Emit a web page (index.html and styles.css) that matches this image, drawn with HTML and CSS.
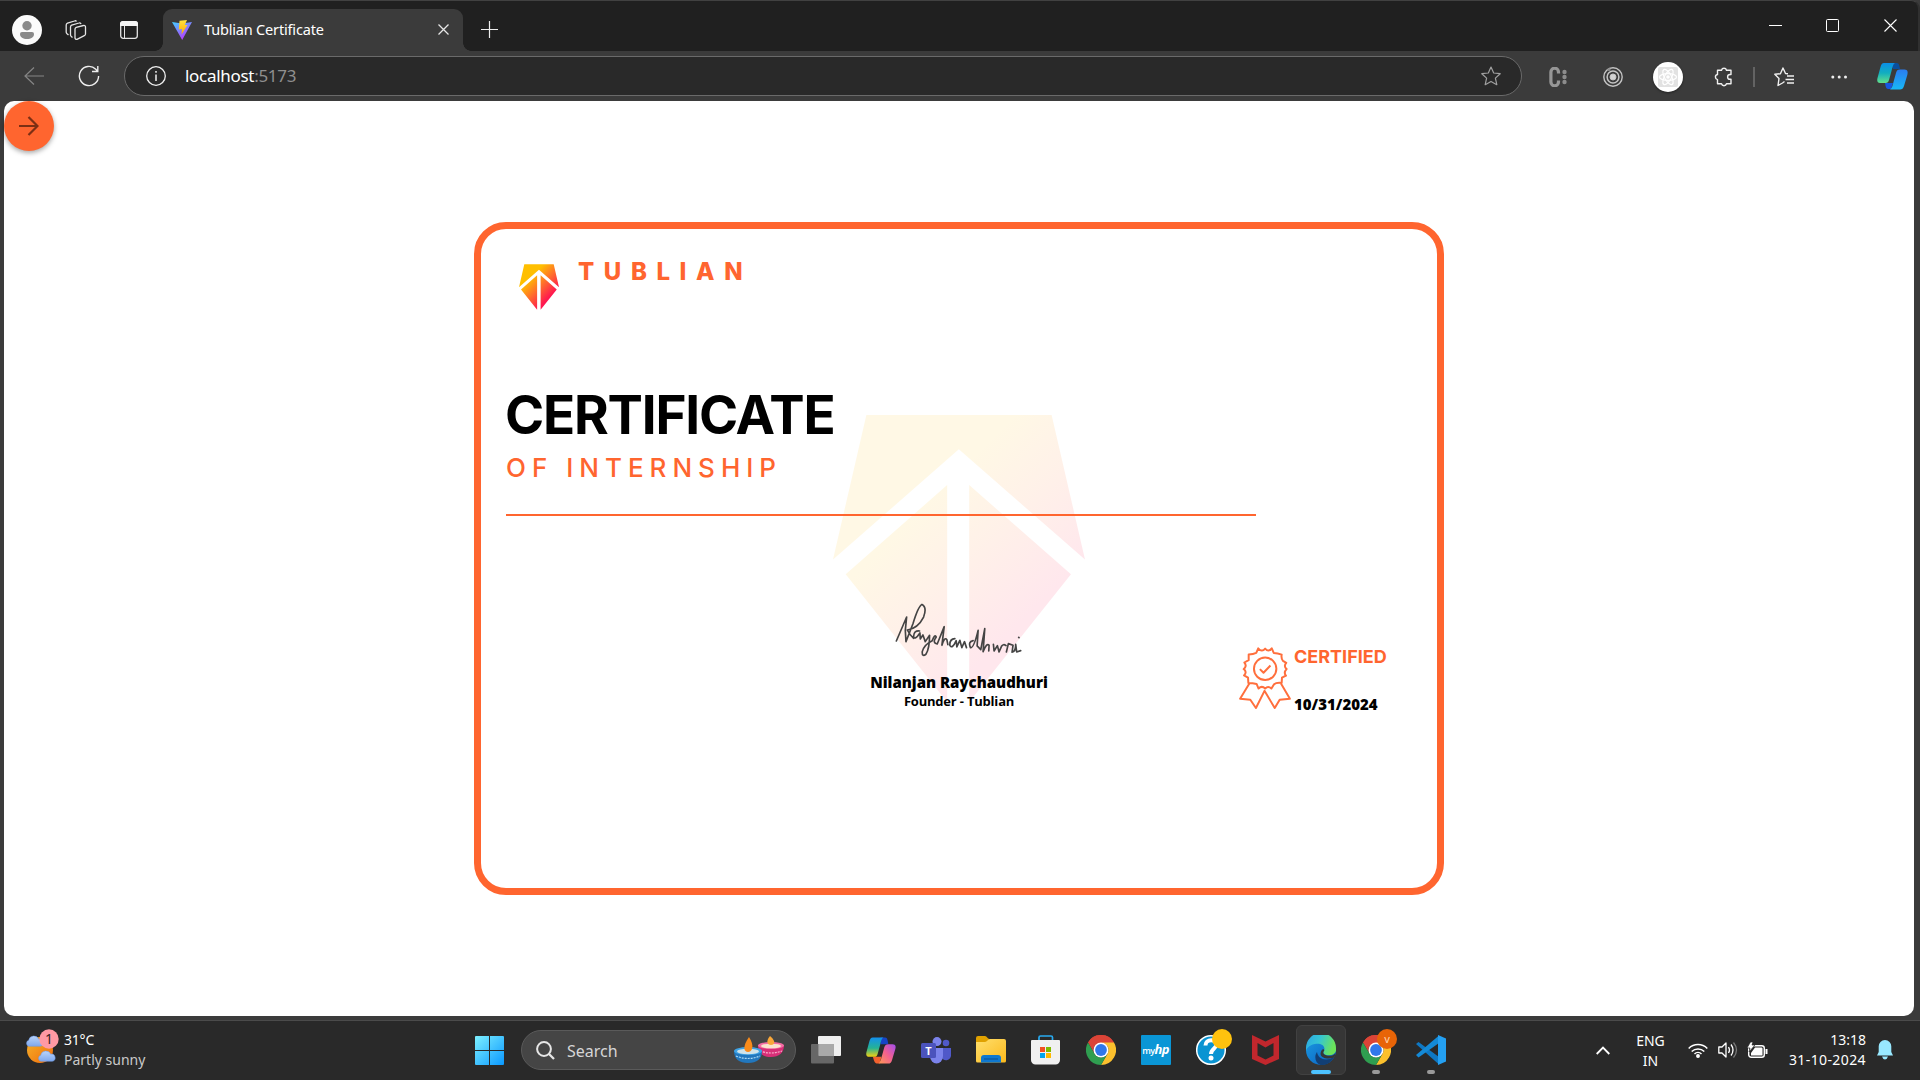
FILE: index.html
```html
<!DOCTYPE html>
<html lang="en">
<head>
<meta charset="utf-8">
<title>Tublian Certificate</title>
<link rel="stylesheet" href="styles.css">
</head>
<body>
<svg class="defs" aria-hidden="true">
  <defs>
    <linearGradient id="flame" gradientUnits="userSpaceOnUse" x1="250" y1="300" x2="620" y2="660"><stop offset="0" stop-color="#ffbf00"/><stop offset=".5" stop-color="#ff6d2c"/><stop offset="1" stop-color="#ff1850"/></linearGradient>
    <linearGradient id="flamePale" gradientUnits="userSpaceOnUse" x1="300" y1="330" x2="620" y2="650"><stop offset="0" stop-color="#fff8e5"/><stop offset=".5" stop-color="#fff0e9"/><stop offset="1" stop-color="#ffe7ed"/></linearGradient>
    <linearGradient id="vite" x1="0" y1="0" x2=".6" y2="1"><stop offset="0" stop-color="#41d1ff"/><stop offset="1" stop-color="#bd34fe"/></linearGradient>
    <linearGradient id="bolt" x1="0" y1="0" x2="0" y2="1"><stop offset="0" stop-color="#ffe340"/><stop offset="1" stop-color="#ffa800"/></linearGradient>
    <linearGradient id="win" gradientUnits="userSpaceOnUse" x1="0" y1="0" x2="29" y2="29"><stop offset="0" stop-color="#7df0ff"/><stop offset="1" stop-color="#0a98ff"/></linearGradient>
    <linearGradient id="copA" x1="0" y1="0" x2="0" y2="1"><stop offset="0" stop-color="#0a8fe8"/><stop offset=".5" stop-color="#12aebf"/><stop offset="1" stop-color="#63e08a"/></linearGradient>
    <linearGradient id="copB" x1="0" y1="0" x2="0" y2="1"><stop offset="0" stop-color="#2a7cf0"/><stop offset="1" stop-color="#18b8f5"/></linearGradient>
    <linearGradient id="copC" x1="0" y1="0" x2="0" y2="1"><stop offset="0" stop-color="#1390ee"/><stop offset=".55" stop-color="#25b394"/><stop offset="1" stop-color="#f4d010"/></linearGradient>
    <linearGradient id="copD" x1="1" y1="0" x2="0" y2="1"><stop offset="0" stop-color="#a04df0"/><stop offset=".5" stop-color="#f3608f"/><stop offset="1" stop-color="#ff9a52"/></linearGradient>
    <linearGradient id="folder" x1="0" y1="0" x2="1" y2="1"><stop offset="0" stop-color="#ffdf6d"/><stop offset="1" stop-color="#fbb91c"/></linearGradient>
    <linearGradient id="edgeTop" x1="0" y1="0" x2="1" y2=".3"><stop offset="0" stop-color="#2aa5e6"/><stop offset=".5" stop-color="#35c5d3"/><stop offset="1" stop-color="#6be35a"/></linearGradient>
    <linearGradient id="edgeSide" x1="0" y1="0" x2="1" y2="1"><stop offset="0" stop-color="#1b9de2"/><stop offset="1" stop-color="#0a5cc0"/></linearGradient>
    <linearGradient id="sun" x1="0" y1="0" x2="1" y2="1"><stop offset="0" stop-color="#f5b52a"/><stop offset="1" stop-color="#f06a0c"/></linearGradient>
    <linearGradient id="cloudFill" x1="0" y1="0" x2="0" y2="1"><stop offset="0" stop-color="#b9d4fb"/><stop offset="1" stop-color="#7fa8ee"/></linearGradient>
    <symbol id="tublian" viewBox="40 45 755 860"><path d="M140 45H695L795 478L417 148L40 478ZM78 522L382 255V905ZM753 522L448 255V905Z"/></symbol>
    <symbol id="chrome" viewBox="0 0 30 30">
      <path fill="#db4437" d="M15 15L2 7.5A15 15 0 0 1 28 7.5Z"/>
      <path fill="#db4437" d="M2 7.500A15 15 0 0 1 28 7.500H15A7.500 7.500 0 0 0 8.500 18.700Z"/>
      <path fill="#fbc02d" d="M28 7.500A15 15 0 0 1 15 30L21.500 18.700A7.500 7.500 0 0 0 15 7.500Z"/>
      <path fill="#2f9e50" d="M2 7.500A15 15 0 0 0 15 30L21.500 18.700A7.500 7.500 0 0 1 8.500 18.700Z"/>
      <circle cx="15" cy="15" r="7.500" fill="#fff"/><circle cx="15" cy="15" r="5.900" fill="#3077ea"/>
    </symbol>
    <symbol id="cloud" viewBox="0 0 18 11"><path fill="url(#cloudFill)" stroke="#6f9ae4" stroke-width=".5" d="M3.500 10.500A3 3 0 0 1 3.500 4.800A5 5 0 0 1 13 3.800A3.400 3.400 0 0 1 14.500 10.500Z"/></symbol>
  </defs>
</svg>

<header class="titlebar">
  <div class="slot avatar-slot"><svg class="avatar" width="30" height="30" viewBox="0 0 30 30"><circle cx="15" cy="15" r="15" fill="#fbfbfb"/><circle cx="15" cy="10.800" r="4.700" fill="#8a8a8a"/><path fill="#8a8a8a" d="M10 17H20A2 2 0 0 1 22 19C22 22.500 19 24 15 24S8 22.500 8 19A2 2 0 0 1 10 17Z"/></svg></div>
  <div class="slot workspaces"><svg width="22" height="21" viewBox="0 0 22 21" fill="none" stroke="#e4e4e4" stroke-width="1.300" stroke-linejoin="round"><path d="M11.200 7.300L18.500 5.500A1.500 1.500 0 0 1 20.500 7V14A2 2 0 0 1 19.300 15.700L12 19.300A1.500 1.500 0 0 1 10 18V9A2 2 0 0 1 11.200 7.300Z"/><path d="M7.500 17.500L6.300 16.500A2 2 0 0 1 5.500 15V7A2 2 0 0 1 6.700 5.200L14 3A1.500 1.500 0 0 1 16 4M3.500 15L1.800 13.500A2 2 0 0 1 1.200 12V5A2 2 0 0 1 2.500 3.200L9.500 1A1.500 1.500 0 0 1 11.500 1.500"/></svg></div>
  <div class="slot tab-actions"><svg width="18" height="18" viewBox="0 0 18 18"><rect x=".7" y=".7" width="16.600" height="16.600" rx="2.500" fill="none" stroke="#e4e4e4" stroke-width="1.300"/><path fill="#f4f4f4" d="M3 0H15A3 3 0 0 1 18 3V5H0V3A3 3 0 0 1 3 0Z"/><path stroke="#e4e4e4" d="M4.500 5V17.500"/></svg></div>
  <div class="tab">
    <svg width="20" height="20" viewBox="0 0 20 20"><path fill="url(#vite)" d="M0 2L10 3.500L20 2L10.200 20Z"/><path fill="url(#bolt)" d="M7.500.8L15 0L12.800 5H15.500L9.500 14.500L10 9L6.800 9.500Z"/></svg>
    <span class="tab-title">Tublian Certificate</span>
    <svg class="tab-close" width="11" height="11" viewBox="0 0 11 11" stroke="#e6e6e6" stroke-width="1.300"><path d="M.5.5L10.500 10.500M10.500.5L.5 10.500"/></svg>
  </div>
  <svg class="new-tab" width="17" height="17" viewBox="0 0 17 17" stroke="#eee" stroke-width="1.200"><path d="M8.500 0V17M0 8.500H17"/></svg>
  <div class="window-controls">
    <svg width="13" height="13" viewBox="0 0 13 13"><path stroke="#fff" d="M0 6.500H13"/></svg>
    <svg width="13" height="13" viewBox="0 0 13 13"><rect x=".5" y=".5" width="12" height="12" rx="1" fill="none" stroke="#fff"/></svg>
    <svg width="13" height="13" viewBox="0 0 13 13"><path stroke="#fff" stroke-width="1.100" d="M.5.5L12.500 12.500M12.500.5L.5 12.500"/></svg>
  </div>
</header>

<nav class="toolbar">
  <svg class="back" width="20" height="18" viewBox="0 0 20 18" fill="none" stroke="#858585" stroke-width="1.200"><path d="M20 9H1M10 .5L1 9L10 17.500"/></svg>
  <svg class="reload" width="22" height="22" viewBox="0 0 22 22" fill="none" stroke="#eee" stroke-width="1.400"><path d="M20.600 11A9.600 9.600 0 1 1 17.800 4.200L19.500 6.200M19.800 1V6.500H14"/></svg>
  <div class="address">
    <svg width="20" height="20" viewBox="0 0 20 20" fill="none" stroke="#f0f0f0" stroke-width="1.300"><circle cx="10" cy="10" r="9.300"/><path d="M10 8.500V15M10 5V6.700" stroke-width="1.500"/></svg>
    <span class="url">localhost<span class="port">:5173</span></span>
    <svg class="bookmark" width="20" height="20" viewBox="0 0 20 20" fill="none" stroke="#a0a0a0" stroke-width="1.200" stroke-linejoin="round"><path d="M10 1L12.700 7L19.200 7.700L14.400 12.100L15.800 18.700L10 15.400L4.200 18.700L5.600 12.100L.8 7.700L7.300 7Z"/></svg>
  </div>
  <div class="extensions">
    <span><svg width="18" height="20" viewBox="0 0 18 20"><path fill="none" stroke="#969696" stroke-width="3.200" d="M9.500 6.500V5A3.800 3.800 0 0 0 1.900 5V15A3.800 3.800 0 0 0 9.500 15V13.500"/><g fill="#8c8c8c"><circle cx="15.500" cy="5" r="2.200"/><circle cx="15.500" cy="10" r="2.200"/><circle cx="15.500" cy="15" r="2.200"/></g></svg></span>
    <span><svg width="20" height="20" viewBox="0 0 20 20" fill="none" stroke="#c4c4c4"><circle cx="10" cy="10" r="9.200" stroke-width="1.400"/><circle cx="10" cy="10" r="5.900" stroke-width="1.500"/><circle cx="10" cy="10" r="3" fill="#d2d2d2"/><circle cx="6" cy="2.500" r="1.600" fill="#8b8b8b" stroke="none"/></svg></span>
    <span><svg class="react" width="30" height="30" viewBox="0 0 30 30"><circle cx="15" cy="15" r="15" fill="#fff"/><rect x="5" y="5" width="20" height="20" rx="2" fill="#e2e2e2"/><g fill="none" stroke="#fff" stroke-width="1.200"><ellipse cx="15" cy="15" rx="8.500" ry="3.400"/><ellipse cx="15" cy="15" rx="8.500" ry="3.400" transform="rotate(60 15 15)"/><ellipse cx="15" cy="15" rx="8.500" ry="3.400" transform="rotate(120 15 15)"/></g><circle cx="15" cy="15" r="1.800" fill="#fff"/></svg></span>
    <span><svg width="19" height="20" viewBox="0 0 19 20" fill="none" stroke="#f0f0f0" stroke-width="1.400" stroke-linejoin="round"><path d="M3.500 3.200H7.500A2.600 2.600 0 0 1 12.500 3.200H17V7.500H16A2.300 2.300 0 0 0 16 12.300H17V16.800H12.500A2.600 2.600 0 0 1 7.500 16.800H3.500V12.600A2.600 2.600 0 0 1 3.500 7.500Z"/></svg></span>
    <i class="divider"></i>
    <span class="favorites"><svg width="20" height="20" viewBox="0 0 20 20" fill="none" stroke="#f0f0f0" stroke-width="1.400" stroke-linejoin="round"><path d="M14 6.700L11.500 6.500L9 1L6.400 6.700L.8 7.300L5 11.500L4 18.500L8.500 16L10.500 14.500M13 9H20M11.500 12.500H20M13 16H20"/></svg></span>
    <span class="more"><svg width="16" height="4" viewBox="0 0 16 4" fill="#eee"><circle cx="1.800" cy="2" r="1.500"/><circle cx="8.200" cy="2" r="1.500"/><circle cx="14.500" cy="2" r="1.500"/></svg></span>
    <span class="copilot"><svg width="31" height="27" viewBox="0 0 31 27"><path fill="#0a4f9d" d="M14 0H20C22 0 22.500 3 23 6H16Z"/><path fill="#1657e0" d="M8 20H16L14 26H11C9 26 8.500 23 8 20Z"/><path fill="url(#copA)" d="M7 0H18C16 1 15.500 4 14.500 8L12 17C11.500 19 10.500 20 8.500 20H3C0 20 0 17 .5 15L3.500 4C4.300 1.500 5 0 7 0Z"/><path fill="url(#copB)" d="M23 6.500H27.500C31 6.500 31 9.500 30.300 12L27 23C26.300 25.500 25 26.500 23 26.500H13C15 25 15.500 23 16.500 19L19 10C19.700 7.500 20.500 6.500 23 6.500Z"/></svg></span>
  </div>
</nav>

<main class="page">
  <button class="next" aria-label="Next"><svg width="20" height="20" viewBox="0 0 20 20" fill="none" stroke="#7c2f14" stroke-width="2.200"><path d="M0 10H18M9.500 1L18.500 10L9.500 19"/></svg></button>
  <article class="certificate">
    <svg class="watermark" fill="url(#flamePale)"><use href="#tublian"/></svg>
    <div class="brand">
      <svg class="logo" fill="url(#flame)"><use href="#tublian"/></svg>
      <span class="brand-name">TUBLIAN</span>
    </div>
    <h1>CERTIFICATE</h1>
    <h2>OF INTERNSHIP</h2>
    <hr>
    <div class="sign-row">
      <div class="signer">
        <svg class="signature" viewBox="225 605 385 165" fill="none" stroke="#444" stroke-width="5" stroke-linecap="round" stroke-linejoin="round"><path d="M229 722L260 650L256 690L258 724L279 670Q295 617 306 612Q322 620 311 650Q294 684 262 689Q270 705 281 714M299 692Q282 690 281 708Q284 722 300 698L301 716L309 704L316 724L329 705Q329 745 318 762Q306 771 307 754Q312 733 337 721Q345 700 349 710Q336 728 352 731L373 679L366 735Q374 708 381 718L384 733M405 715Q389 716 390 735Q397 748 409 721L411 740L420 720L426 742L434 724L440 742M460 721Q444 724 452 742Q462 744 475 690L472 737L483 748L495 685L490 754Q501 726 508 735L507 752M521 732L523 752L533 736L538 755L546 737Q551 730 559 736M560 755L566 730L580 735L577 756Q588 755 588 732L591 755L603 751M597 711L598 712"/></svg>
        <strong class="signer-name">Nilanjan Raychaudhuri</strong>
        <span class="signer-role">Founder - Tublian</span>
      </div>
      <div class="seal">
        <svg class="ribbon" viewBox="57 80 157 188" fill="none" stroke="#ff6f3d" stroke-width="6" stroke-linejoin="round"><path d="M115 84Q126 97 136 85Q146 97 156 84L162 98Q174 98 186 103Q184 115 190 122L200 128Q191 138 201 147Q191 157 199 167L187 173L186 189Q170 187 163 193L155 206Q145 196 136 206Q126 196 116 206L110 192Q98 189 85 189L84 173L72 166Q82 156 71 147Q82 138 73 127L86 120L86 103Q100 102 109 98ZM89 189L60 237L91 240L108 265L134 213L165 265L180 240L211 237L183 189"/><circle cx="136" cy="146" r="34"/><path d="M120 147L131 158L152 136"/></svg>
        <div class="seal-text"><span class="certified">CERTIFIED</span><strong class="date">10/31/2024</strong></div>
      </div>
    </div>
  </article>
</main>

<footer class="taskbar">
  <div class="weather">
    <div class="weather-icon"><svg width="34" height="35" viewBox="0 0 34 35"><circle cx="15" cy="21" r="13" fill="url(#sun)"/><use href="#cloud" x="0" y="6" width="19" height="12"/><use href="#cloud" x="12" y="21" width="19" height="12"/><circle cx="24" cy="10" r="9.700" fill="#ff99a4"/></svg><span class="count">1</span></div>
    <div class="weather-text"><span>31°C</span><span class="sub">Partly sunny</span></div>
  </div>
  <svg class="start" width="29" height="29" viewBox="0 0 29 29" fill="url(#win)"><path d="M0 1A1 1 0 0 1 1 0H14V14H0ZM15 0H28A1 1 0 0 1 29 1V14H15ZM0 15H14V29H1A1 1 0 0 1 0 28ZM15 15H29V28A1 1 0 0 1 28 29H15Z"/></svg>
  <div class="search">
    <svg width="19" height="19" viewBox="0 0 19 19" fill="none" stroke="#e6e6e6" stroke-width="2"><circle cx="8" cy="8" r="6.900"/><path d="M13 13L18 18" stroke-width="2.300"/></svg>
    <span>Search</span>
    <svg class="lamps" width="50" height="28" viewBox="0 0 50 28"><path fill="#d82f78" d="M24 9H50C50 17 45 21 37 21S24 17 24 9Z"/><ellipse cx="37" cy="9.500" rx="13" ry="3.500" fill="#f56da5"/><ellipse cx="37" cy="10" rx="10" ry="2.300" fill="#fbe3cf"/><path fill="#f9a73a" d="M36 0C43 6 40 9 37 9S31 6 36 0Z"/><path stroke="#f7b5cf" stroke-width="1.200" stroke-dasharray="2 1" fill="none" d="M26 15Q37 19 48 15"/><path fill="#2277bd" d="M0 15H28C28 23 23 27 14 27S0 23 0 15Z"/><ellipse cx="14" cy="15" rx="14" ry="4" fill="#3ea3e6"/><ellipse cx="14" cy="15.500" rx="11" ry="2.700" fill="#cfe3ea"/><path fill="#f98b1b" d="M15 1C21 10 18 16 14 16S8 11 15 1Z"/><path stroke="#a9d9f5" stroke-width="1.200" stroke-dasharray="2 1" fill="none" d="M2 20Q14 25 26 20"/></svg>
  </div>
  <div class="apps">
    <span><svg width="30" height="28" viewBox="0 0 30 28"><rect x="7" width="23" height="20" rx="1" fill="#efefef"/><rect y="8" width="23" height="19.500" rx="1" fill="#777" opacity=".8"/><path fill="#a9a9a9" d="M8 8H23V20H8Z"/></svg></span>
    <span><svg width="30" height="27" viewBox="0 0 31 27"><path fill="#1744c4" d="M15 0H20C22 0 22.500 3 23 7H15Z"/><path fill="#f2612e" d="M7 20H16L14 27H11C9 27 8 23 7 20Z"/><path fill="url(#copC)" d="M7 0H18C16 1 15.500 4 14.500 8L12 17C11.500 19 10.500 20 8.500 20H3C0 20 0 17 .5 15L3.500 4C4.300 1.500 5 0 7 0Z"/><path fill="url(#copD)" d="M23 7H27.500C31 7 31 10 30.300 12L27 23C26.300 26 25 27 23 27H13C15 25 15.500 23 16.500 19L19 10C19.700 8 20.500 7 23 7Z"/></svg></span>
    <span><svg width="30" height="27" viewBox="0 0 30 27"><circle cx="25" cy="6" r="3.300" fill="#5059c9"/><path fill="#5059c9" d="M20 11H30V17.500A5 5 0 0 1 20 19Z"/><circle cx="16" cy="4.600" r="4.500" fill="#7b83eb"/><path fill="#7b83eb" d="M9 11H22V19A6.500 7.500 0 0 1 9 19Z"/><rect y="6" width="15" height="15" rx="1.500" fill="#4b53bc"/><text class="glyph-t" x="7.500" y="17.500" text-anchor="middle">T</text></svg></span>
    <span><svg width="30" height="28" viewBox="0 0 30 28"><path fill="#e0a100" d="M0 2A2 2 0 0 1 2 0H9C11 0 11.500 3 13.500 3V10H0Z"/><path fill="url(#folder)" d="M0 6H9C11 6 12 3 14 3H28A2 2 0 0 1 30 5V25A1.500 1.500 0 0 1 28.500 26.500H1.500A1.500 1.500 0 0 1 0 25Z"/><path fill="#0f78d0" d="M5 22A3 3 0 0 1 8 19H22A3 3 0 0 1 25 22V26.500H5Z"/><path stroke="#0a4f91" d="M8 23H22"/></svg></span>
    <span><svg width="29" height="30" viewBox="0 0 29 30"><path fill="none" stroke="#28aaf0" stroke-width="1.700" d="M8 6V2.500A1.500 1.500 0 0 1 9.500 1H20A1.500 1.500 0 0 1 21.500 2.500V6"/><path fill="#f0f0f0" d="M1 5H28A1 1 0 0 1 29 6V25A4.500 4.500 0 0 1 24.500 29.500H4.500A4.500 4.500 0 0 1 0 25V6A1 1 0 0 1 1 5Z"/><path fill="#f25022" d="M9 12H14V17H9Z"/><path fill="#7fba00" d="M15 12H20V17H15Z"/><path fill="#00a4ef" d="M9 18H14V23H9Z"/><path fill="#ffb900" d="M15 18H20V23H15Z"/></svg></span>
    <span><svg width="30" height="30"><use href="#chrome"/></svg></span>
    <span class="myhp"><b>my<em>hp</em></b></span>
    <span><svg width="36" height="36" viewBox="0 0 36 36" class="help"><circle cx="15" cy="21" r="14.300" fill="#0a94d2" stroke="#fff" stroke-width="1.500"/><path fill="none" stroke="#fff" stroke-width="4" d="M9.500 16.500C9.500 9.500 20.500 10 20.500 15.500C20.500 19.500 15 19.500 15 25"/><circle cx="15" cy="29" r="2.500" fill="#fff"/><circle cx="26" cy="10" r="10" fill="#ffc20e"/></svg></span>
    <span><svg width="27" height="30" viewBox="0 0 27 30"><path fill="#c1272d" d="M0 0L13.500 6.500L27 0V24L13.500 30L0 24Z"/><path fill="#292929" d="M5.500 8L13.500 12.500L21.500 8V20.500L13.500 24.500L5.500 20.500Z"/></svg></span>
    <span class="active"><svg width="30" height="30" viewBox="0 0 30 30"><circle cx="15" cy="15" r="15" fill="url(#edgeSide)"/><path fill="#123f75" d="M11 17C12 24 20 27 28 22C25 28 20 30.500 14.500 30C9 28 8 21 11 17Z"/><path fill="url(#edgeTop)" d="M0 13A15 15 0 0 1 30 13C31 19 25 21 20 20C18 19 16.500 18 18 16C20 11 15 8 9 9C5 9.500 1 12 0 16Z"/><path fill="#363636" d="M18.300 15.500C17 17 16.500 19 20 20.300C24 21.500 28 20.500 29 18.500C29.500 20 29 21.500 28 22.500C22 25 15 23 14.500 19C14.500 15 18 12.500 18.300 15.500Z"/></svg><i class="run wide"></i></span>
    <span><svg class="chrome-badged" width="36" height="36" viewBox="0 0 36 36"><use href="#chrome" y="6" width="30" height="30"/><circle cx="26" cy="10" r="10" fill="#e86407"/><text class="glyph-v" x="26" y="13.500" text-anchor="middle">V</text></svg><i class="run"></i></span>
    <span><svg width="30" height="30" viewBox="0 0 30 30"><path fill="#0e78c4" d="M0 9L2.500 7L23 22V29.500Z"/><path fill="#148ad7" d="M0 20L23 .5V8L2.500 22.500Z"/><path fill="#24a0f2" d="M22 0L30 3.500V26.500L22 30Z"/></svg><i class="run"></i></span>
  </div>
  <div class="tray">
    <svg class="chevron" width="14" height="9" viewBox="0 0 14 9" fill="none" stroke="#fff" stroke-width="1.800"><path d="M.7 8L7 1.500L13.300 8"/></svg>
    <div class="lang"><span>ENG</span><span>IN</span></div>
    <svg class="wifi" width="20" height="16" viewBox="0 0 20 16" fill="none" stroke="#fff" stroke-width="1.500"><path d="M.7 6.500A13 13 0 0 1 19.300 6.500M3.700 9.500A9 9 0 0 1 16.300 9.500M6.500 12A5 5 0 0 1 13.500 12"/><circle cx="10" cy="14" r="1.200" fill="#fff"/></svg>
    <svg class="volume" width="21" height="16" viewBox="0 0 21 16" fill="none" stroke="#fff" stroke-width="1.300" stroke-linejoin="round"><path d="M.8 5H4L8 1V15L4 11H.8ZM10.500 5Q12.500 8 10.500 11M13 2.500Q17 8 13 13.500"/><path stroke="#777" d="M15.500.5Q21.500 8 15.500 15.500"/></svg>
    <svg class="battery" width="21" height="17" viewBox="0 0 21 17"><rect x="1.700" y="3.700" width="15.600" height="11.600" rx="2.500" fill="none" stroke="#fff" stroke-width="1.400"/><path fill="#fff" d="M4 13V11L8 5.500H14.500A1 1 0 0 1 15.500 6.500V13.500H4ZM18.500 7H20.500V12H18.500Z"/><path fill="#fff" stroke="#292929" stroke-width=".7" d="M3.500 0H6L5 3H8L2 10L3 6H0Z"/></svg>
    <div class="clock"><span>13:18</span><span class="today">31-10-2024</span></div>
    <svg class="bell" width="16" height="20" viewBox="0 0 16 20" fill="#98e8ff"><path d="M8 0A6.300 6.300 0 0 1 14.300 6.500V12L16 15.500H0L1.700 12V6.500A6.300 6.300 0 0 1 8 0ZM5 16.500H11Q10 19.500 8 19.500T5 16.500Z"/></svg>
  </div>
</footer>
</body>
</html>
```

FILE: styles.css
```css
* { box-sizing: border-box; }
body {
  margin: 0;
  width: 1920px;
  height: 1080px;
  overflow: hidden;
  display: flex;
  flex-direction: column;
  background: #3b3b3b;
  font-family: "Noto Sans", "Open Sans", sans-serif;
  color: #fff;
}
svg { display: block; flex: none; }
.defs { position: absolute; width: 0; height: 0; }

/* Title bar */
.titlebar {
  height: 51px;
  flex: none;
  display: flex;
  align-items: center;
  background: #202020;
  border-top: 1px solid #414141;
  border-right: 2px solid #303030;
  border-top-right-radius: 9px;
}
.slot { display: flex; justify-content: center; padding-top: 8px; }
.avatar-slot { width: 54px; }
.workspaces { width: 44px; }
.tab-actions { width: 62px; }
.tab {
  position: relative;
  align-self: flex-end;
  width: 300px;
  height: 42px;
  margin-left: 3px;
  padding: 0 14px 1px 9px;
  display: flex;
  align-items: center;
  background: #3b3b3b;
  border-radius: 9px 9px 0 0;
}
.tab::before, .tab::after {
  content: "";
  position: absolute;
  bottom: 0;
  width: 8px;
  height: 8px;
}
.tab::before { left: -8px; background: radial-gradient(circle at 0 0, transparent 7.5px, #3b3b3b 8px); }
.tab::after { right: -8px; background: radial-gradient(circle at 100% 0, transparent 7.5px, #3b3b3b 8px); }
.tab-title { margin: 0 0 1px 12px; font-size: 14.500px; letter-spacing: -.18px; }
.tab-close { margin-left: auto; }
.new-tab { margin: 7px 0 0 18px; }
.window-controls { margin-left: auto; margin-right: 21.500px; margin-top: -1px; display: flex; gap: 44.500px; }

/* Toolbar */
.toolbar { height: 50px; flex: none; display: flex; align-items: center; }
.back { margin-left: 24px; }
.reload { margin-left: 34px; }
.address {
  width: 1398px;
  height: 40px;
  margin-left: 24px;
  padding: 0 20px 0 21px;
  display: flex;
  align-items: center;
  background: #292929;
  border: 1px solid #6a6a6a;
  border-radius: 20px;
}
.url { margin-left: 19px; font-size: 17px; letter-spacing: -.3px; line-height: 36px; padding-bottom: 1px; }
.port { color: #8f8f8f; }
.bookmark { margin-left: auto; }
.extensions { display: flex; align-items: center; margin: 1px 0 0 8px; }
.extensions span { width: 55.300px; display: flex; justify-content: center; }
.extensions .favorites { width: 53.500px; }
.extensions .more { width: 56.500px; }
.extensions .copilot { width: 50px; }
.divider { width: 2px; height: 20px; margin: 0 2px; background: #636363; }
.react { filter: drop-shadow(0 1px 1px #222); }

/* Page */
.page {
  position: relative;
  width: 1910px;
  height: 915px;
  flex: none;
  margin-left: 4px;
  display: flex;
  align-items: center;
  justify-content: center;
  background: #fff;
  border-radius: 10px;
  color: #000;
}
.next {
  position: absolute;
  left: 0;
  top: 0;
  width: 50px;
  height: 50px;
  padding: 0;
  display: flex;
  align-items: center;
  justify-content: center;
  border: 0;
  border-radius: 50%;
  background: #ff652f;
  box-shadow: 0 2px 5px rgba(0, 0, 0, .35);
}
.certificate {
  position: relative;
  width: 970px;
  height: 673px;
  padding-top: 29px;
  border: 7px solid #ff652f;
  border-radius: 32px;
}
.certificate > * { position: relative; }
.certificate .watermark { position: absolute; left: 352px; top: 186px; width: 252px; height: 287px; }
.brand { display: flex; height: 52px; padding-left: 38px; }
.logo { width: 40px; height: 46px; margin-top: 6px; }
.brand-name {
  margin-left: 19px;
  font: 800 24px/28px Inter, sans-serif;
  letter-spacing: 9.600px;
  color: #ff652f;
}
h1 {
  margin: 75px 0 0 24px;
  font: 700 53px/60px Inter, sans-serif;
  letter-spacing: -1.200px;
}
h2 {
  margin: 8px 0 0 25px;
  font: 500 26px/30px Inter, sans-serif;
  letter-spacing: 6px;
  color: #ff652f;
}
hr { width: 750px; height: 2px; margin: 31px 0 0 25px; border: 0; background: #ff652f; }
.sign-row { display: grid; grid-template-columns: 1fr 200px 1fr; margin-top: 86px; }
.signer { grid-column: 2; display: flex; flex-direction: column; align-items: center; white-space: nowrap; font-family: "Open Sans", sans-serif; }
.signature { width: 128px; height: 55px; }
.signer-name { margin-top: 15px; font-size: 15px; font-weight: 800; line-height: 20px; }
.signer-role { font-size: 13px; font-weight: 700; line-height: 18px; letter-spacing: -.2px; }
.seal { display: flex; margin: 45px 0 0 180px; }
.ribbon { width: 52px; height: 62px; }
.seal-text { display: flex; flex-direction: column; margin-left: 3px; }
.certified { font: 700 18px/20px Inter, sans-serif; color: #ff652f; }
.date { margin-top: 27px; font: 800 15px/20px "Open Sans", sans-serif; }

/* Taskbar */
.taskbar {
  height: 60px;
  flex: none;
  margin-top: 4px;
  padding-bottom: 1px;
  display: flex;
  align-items: center;
  background: #292929;
  border-top: 1px solid #4b4b4b;
}
.weather { width: 475px; padding-left: 25px; display: flex; font-size: 14px; line-height: 20px; }
.weather-icon { position: relative; width: 34px; margin-top: -2px; }
.count { position: absolute; left: 19px; top: 0; width: 10px; text-align: center; color: #3a2225; }
.weather-text { margin: -1px 0 0 5px; display: flex; flex-direction: column; letter-spacing: -.2px; }
.sub { color: #c9c9c9; letter-spacing: 0; }
.search {
  width: 275px;
  height: 40px;
  margin-left: 17px;
  padding: 0 11px 0 14px;
  display: flex;
  align-items: center;
  background: #454545;
  border: 1px solid #5a5a5a;
  border-radius: 20px;
  font-size: 16px;
  color: #d6d6d6;
}
.search span { margin-left: 12px; padding-top: 1px; }
.lamps { margin-left: auto; }
.apps { display: flex; margin-left: 2px; height: 50px; }
.apps span { position: relative; width: 55px; display: flex; align-items: center; justify-content: center; }
.apps .active::before {
  content: "";
  position: absolute;
  inset: 0 2.500px;
  background: #363636;
  border: 1px solid #414141;
  border-radius: 6px;
}
.active svg { position: relative; }
.run { position: absolute; bottom: 1px; left: 23.500px; width: 8px; height: 4px; border-radius: 2px; background: #9a9a9a; }
.run.wide { left: 17.500px; width: 20px; background: #4cc2ff; }
.glyph-t { font: 700 11px "Open Sans", sans-serif; fill: #fff; }
.glyph-v { font: 600 9px "Open Sans", sans-serif; fill: #ffd0aa; }
.help, .chrome-badged { margin: -6px -6px 0 0; }
.myhp b {
  width: 30px;
  height: 30px;
  background: #0a96d6;
  border-radius: 1px;
  font: 600 9px/29px "Open Sans", sans-serif;
  letter-spacing: -.6px;
  text-align: center;
}
.myhp em { font-size: 13px; font-weight: 700; }
.tray { margin-left: auto; padding-right: 27px; display: flex; align-items: center; font-size: 14px; line-height: 20px; }
.lang, .clock { display: flex; flex-direction: column; }
.lang { width: 40px; margin: 1px 0 0 21px; align-items: center; }
.wifi { margin-left: 17px; }
.volume { margin-left: 10px; }
.battery { margin-left: 8px; }
.clock { width: 84px; margin-left: 14.500px; align-items: flex-end; }
.today { letter-spacing: .4px; }
.bell { margin-left: 11px; }
```
